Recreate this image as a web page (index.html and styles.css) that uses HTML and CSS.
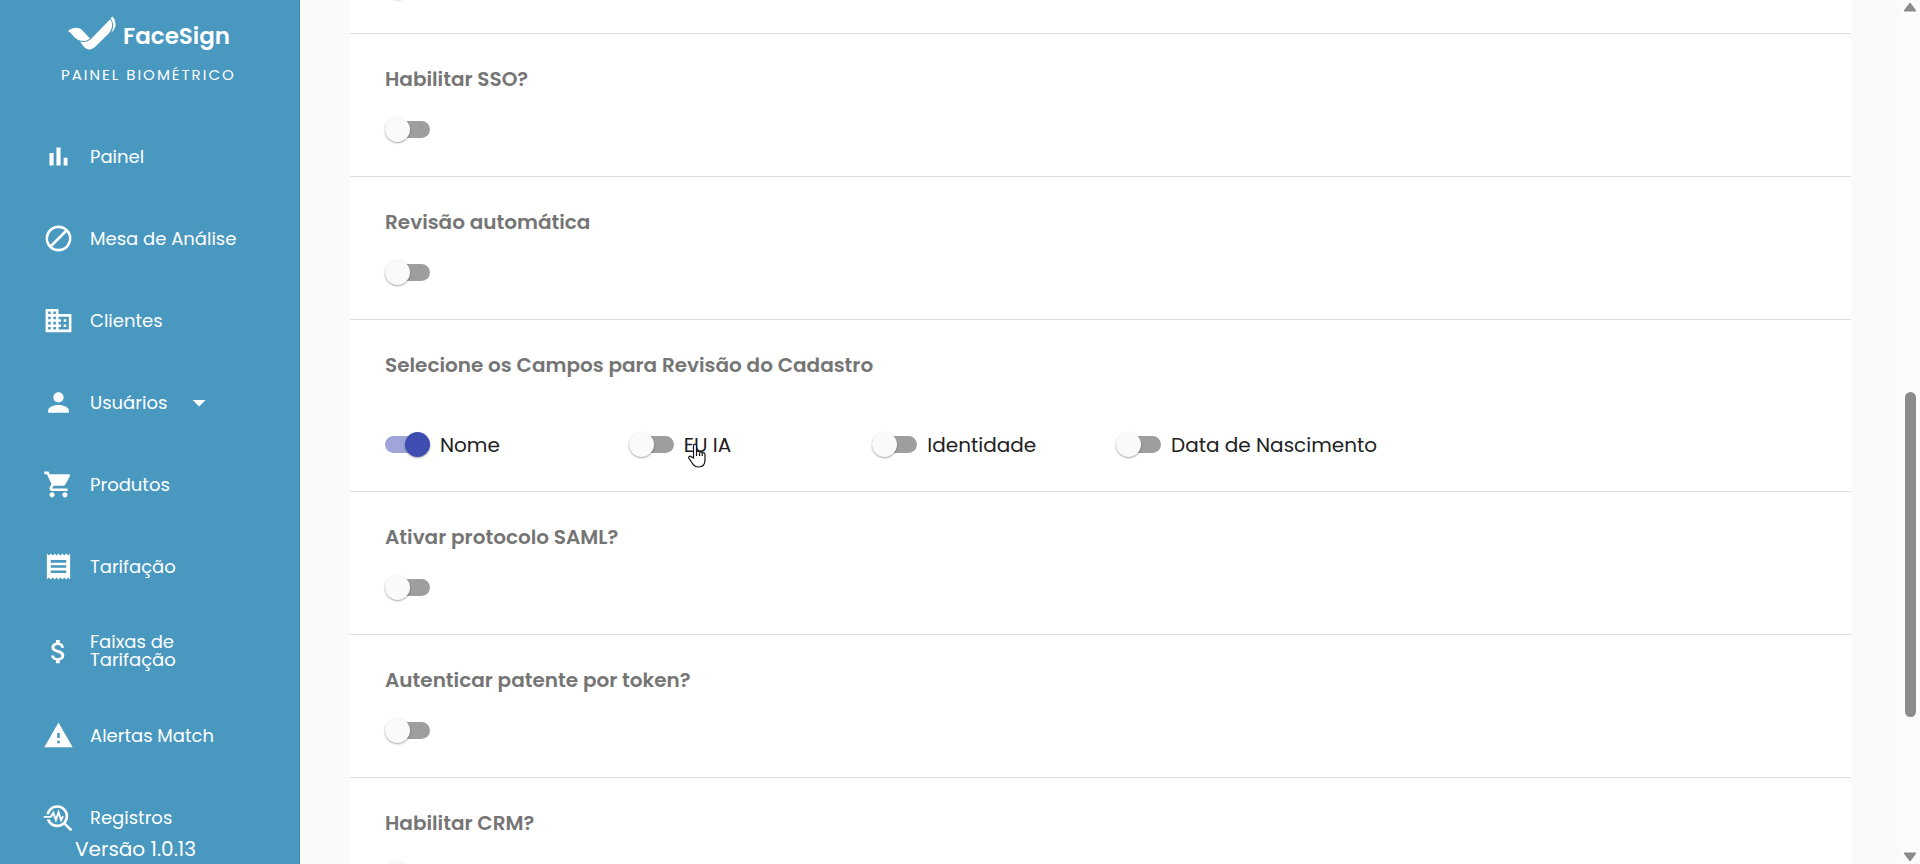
FILE: index.html
```html
<!DOCTYPE html>
<html lang="pt-BR">
<head>
    <meta charset="UTF-8">
    <meta name="viewport" content="width=device-width, initial-scale=1.0">
    <title>FaceSign - Painel Biométrico</title>
    <link rel="stylesheet" href="styles.css">
</head>
<body>
    <aside class="sidebar">
        <a href="#" class="brand">
            <svg class="brand-mark" viewBox="0 0 48 34" aria-hidden="true">
                <path d="M0 15C3 12 10 10 14 14L22 22.500C19 25 16 25.500 12 24.500C6 23 5 18 0 15Z"/>
                <path d="M12 25.500C17 26.500 20 25.500 23 23L42 3.500C44 5 45 9 43 14C42 17 39 19 37 21L27 31C23 34.500 19 34 16 31Z"/>
                <path d="M42.500 2.500L44.300 0.500C47 3 48.500 8 47 11.500C46 14 45 15 43.500 16.500C46 11 45.500 6 42.500 2.500Z"/>
            </svg>
            <span class="brand-name">FaceSign</span>
        </a>
        <p class="brand-sub">PAINEL BIOMÉTRICO</p>

        <nav class="menu">
            <a href="#painel">
                <svg viewBox="0 0 24 24"><path d="M5 9.2h3.2V19H5zM10.400 5h3.200v14h-3.200zm5.600 8h3v6h-3z"/></svg>
                <span>Painel</span>
            </a>
            <a href="#mesa">
                <svg viewBox="0 0 24 24"><path d="M12 2a10 10 0 1 0 0 20 10 10 0 0 0 0-20zm0 2c1.85 0 3.55.63 4.9 1.69L5.69 16.9A8 8 0 0 1 12 4zm0 16a7.9 7.9 0 0 1-4.9-1.69L18.31 7.1A8 8 0 0 1 12 20z"/></svg>
                <span>Mesa de Análise</span>
            </a>
            <a href="#clientes">
                <svg viewBox="0 0 24 24"><path d="M12 7V3H2v18h20V7H12zM6 19H4v-2h2v2zm0-4H4v-2h2v2zm0-4H4V9h2v2zm0-4H4V5h2v2zm4 12H8v-2h2v2zm0-4H8v-2h2v2zm0-4H8V9h2v2zm0-4H8V5h2v2zm10 12h-8v-2h2v-2h-2v-2h2v-2h-2V9h8v10zm-2-8h-2v2h2v-2zm0 4h-2v2h2v-2z"/></svg>
                <span>Clientes</span>
            </a>
            <a href="#usuarios">
                <svg viewBox="0 0 24 24"><path d="M12 12c2.21 0 4-1.79 4-4s-1.79-4-4-4-4 1.79-4 4 1.79 4 4 4zm0 2c-2.67 0-8 1.34-8 4v2h16v-2c0-2.66-5.33-4-8-4z"/></svg>
                <span>Usuários</span>
                <svg viewBox="0 0 24 24"><path d="M7.500 10l5 5 5-5z"/></svg>
            </a>
            <a href="#produtos">
                <svg viewBox="0 0 24 24"><path d="M7 18c-1.1 0-1.99.9-1.99 2S5.9 22 7 22s2-.9 2-2-.9-2-2-2zM1 2v2h2l3.6 7.59-1.35 2.45c-.16.28-.25.61-.25.96 0 1.1.9 2 2 2h12v-2H7.42c-.14 0-.25-.11-.25-.25l.03-.12.9-1.63h7.45c.75 0 1.41-.41 1.75-1.03l3.58-6.49A1 1 0 0 0 20 4H5.21l-.94-2H1zm16 16c-1.1 0-1.99.9-1.99 2s.89 2 1.99 2 2-.9 2-2-.9-2-2-2z"/></svg>
                <span>Produtos</span>
            </a>
            <a href="#tarifacao">
                <svg viewBox="0 0 24 24"><path d="M18 17H6v-2h12v2zm0-4H6v-2h12v2zm0-4H6V7h12v2zM3 22l1.5-1.5L6 22l1.5-1.5L9 22l1.5-1.5L12 22l1.5-1.5L15 22l1.5-1.5L18 22l1.5-1.5L21 22V2l-1.5 1.5L18 2l-1.5 1.5L15 2l-1.5 1.5L12 2l-1.5 1.5L9 2 7.5 3.5 6 2 4.5 3.5 3 2v20z"/></svg>
                <span>Tarifação</span>
            </a>
            <a href="#faixas">
                <svg viewBox="0 0 24 24"><path d="M11.8 10.9c-2.27-.59-3-1.2-3-2.15 0-1.09 1.01-1.85 2.7-1.85 1.78 0 2.44.85 2.5 2.1h2.21c-.07-1.72-1.12-3.3-3.21-3.81V3h-3v2.16c-1.94.42-3.5 1.68-3.5 3.61 0 2.31 1.91 3.46 4.7 4.13 2.5.6 3 1.48 3 2.41 0 .69-.49 1.79-2.7 1.79-2.06 0-2.87-.92-2.98-2.1h-2.2c.12 2.19 1.76 3.42 3.68 3.83V21h3v-2.15c1.95-.37 3.5-1.5 3.5-3.55 0-2.84-2.43-3.81-4.7-4.4z"/></svg>
                <span>Faixas de<br>Tarifação</span>
            </a>
            <a href="#alertas">
                <svg viewBox="0 0 24 24"><path d="M1 21h22L12 2 1 21zm12-3h-2v-2h2v2zm0-4h-2v-4h2v4z"/></svg>
                <span>Alertas Match</span>
            </a>
            <a href="#registros">
                <svg viewBox="0 0 24 24" class="outline">
                    <circle cx="11" cy="11" r="7.500"/>
                    <path d="M16.500 16.500l5.500 5.500"/>
                    <path class="knock" d="M2 11.500h3"/>
                    <path class="thin" d="M0.500 11.500h5.500l2-3 2 5.500 2-6 2 6 1.500-3"/>
                </svg>
                <span>Registros</span>
            </a>
        </nav>
        <p class="version">Versão 1.0.13</p>
    </aside>

    <main>
        <form class="panel">
            <section class="option scrolled">
                <input type="checkbox" class="switch" aria-label="Opção anterior">
            </section>
            <section class="option">
                <h3><label for="sso">Habilitar SSO?</label></h3>
                <input type="checkbox" class="switch" id="sso">
            </section>
            <section class="option">
                <h3><label for="revisao">Revisão automática</label></h3>
                <input type="checkbox" class="switch" id="revisao">
            </section>
            <section class="option">
                <h3>Selecione os Campos para Revisão do Cadastro</h3>
                <div class="fields">
                    <label><input type="checkbox" class="switch" checked>Nome</label>
                    <label>
                        <input type="checkbox" class="switch">EU IA
                        <svg class="pointer" viewBox="0 0 18 25" aria-hidden="true"><path d="M5.500 15V3c0-2.600 3-2.600 3 0v6c.5-1.500 3-1.200 3 .5.500-1.200 2.700-.8 2.700.8.700-.9 2.800-.5 2.800 1.200V17c0 4-2 7-6.500 7-3.500 0-5-1.500-6.300-4L1 15.500c-1-2 1-3 2.300-1.700zM8.500 9v4M11.500 10v3M14.200 11v2"/></svg>
                    </label>
                    <label><input type="checkbox" class="switch">Identidade</label>
                    <label class="wide"><input type="checkbox" class="switch">Data de Nascimento</label>
                </div>
            </section>
            <section class="option">
                <h3><label for="saml">Ativar protocolo SAML?</label></h3>
                <input type="checkbox" class="switch" id="saml">
            </section>
            <section class="option">
                <h3><label for="token">Autenticar patente por token?</label></h3>
                <input type="checkbox" class="switch" id="token">
            </section>
            <section class="option">
                <h3><label for="crm">Habilitar CRM?</label></h3>
                <input type="checkbox" class="switch" id="crm">
            </section>
        </form>
    </main>

    <div class="scrollbar" aria-hidden="true">
        <svg viewBox="0 0 14 10"><path d="M7 1L13 9H1z"/></svg>
        <div class="track"><div class="thumb"></div></div>
        <svg viewBox="0 0 14 10"><path d="M7 9L1 1h12z"/></svg>
    </div>
</body>
</html>
```
FILE: styles.css
```css
* {
    box-sizing: border-box;
}

body {
    margin: 0;
    display: flex;
    height: 100vh;
    overflow: hidden;
    background-color: #fafafa;
    color: #212121;
    font-family: Poppins, Inter, "Open Sans", sans-serif;
    font-size: 20px;
}

/* Sidebar */
.sidebar {
    display: flex;
    flex-direction: column;
    flex: none;
    width: 300px;
    padding-top: 16px;
    background-color: #4998c0;
    border-right: 1px solid #428bb0;
    color: white;
}

.sidebar svg {
    flex: none;
    fill: currentColor;
}

.brand {
    display: flex;
    gap: 7px;
    margin-left: 68px;
    height: 40px;
    color: white;
    text-decoration: none;
}

.brand-mark {
    width: 48px;
    height: 34px;
}

.brand-name {
    font-size: 23px;
    font-weight: 600;
    line-height: 40px;
}

.brand-sub {
    margin: 9px 0 0 61px;
    font-size: 15px;
    line-height: 20px;
    letter-spacing: 2px;
}

.menu {
    display: flex;
    flex-direction: column;
    gap: 51px;
    margin-top: 56px;
    padding-left: 43px;
}

.menu a {
    display: flex;
    align-items: center;
    gap: 16px;
    color: white;
    font-size: 18px;
    line-height: 18px;
    text-decoration: none;
}

.menu svg {
    width: 31px;
    height: 31px;
}

.menu .outline {
    fill: none;
    stroke: white;
    stroke-width: 2;
}

.menu .outline .knock {
    stroke: #4998c0;
    stroke-width: 4;
}

.menu .outline .thin {
    stroke-width: 1.5;
}

.version {
    margin: 0 0 0 75px;
    line-height: 32px;
}

/* Content */
main {
    flex: 1;
    padding: 0 49px 0 50px;
    overflow: hidden;
}

.panel {
    background-color: white;
}

.option {
    padding: 30px 35px 34px;
    border-bottom: 1px solid #e0e0e0;
}

.option.scrolled {
    margin-top: -26px;
    padding-top: 0;
}

h3 {
    margin: 0 0 23px;
    color: #757575;
    font-size: 20px;
    font-weight: 600;
    line-height: 30px;
}

.fields {
    display: grid;
    grid-template-columns: repeat(6, 1fr);
    gap: 31px;
    padding-top: 29px;
}

.fields label {
    display: flex;
    align-items: center;
    gap: 10px;
    position: relative;
    height: 25px;
}

.fields .wide {
    grid-column: span 2;
}

/* Switch */
.switch {
    appearance: none;
    display: flex;
    align-items: center;
    flex: none;
    position: relative;
    width: 45px;
    height: 25px;
    margin: 0;
    cursor: pointer;
}

.switch::before {
    content: "";
    width: 45px;
    height: 17px;
    border-radius: 9px;
    background-color: #9e9e9e;
}

.switch::after {
    content: "";
    position: absolute;
    left: 0;
    width: 25px;
    height: 25px;
    border-radius: 50%;
    background-color: #fafafa;
    box-shadow: 0 1px 2px rgba(0, 0, 0, 0.35);
}

.switch:checked::before {
    background-color: #9fa4d9;
}

.switch:checked::after {
    left: 20px;
    background-color: #3f4db0;
}

/* Hand cursor over the label */
.pointer {
    position: absolute;
    left: 59px;
    top: 11px;
    width: 18px;
    height: 25px;
    fill: white;
    stroke: #111;
    stroke-width: 1.2;
}

/* Scrollbar */
.scrollbar {
    display: flex;
    flex-direction: column;
    align-items: center;
    justify-content: space-between;
    width: 20px;
    padding: 2px 0;
    background-color: #fcfcfc;
}

.scrollbar svg {
    width: 14px;
    height: 10px;
    fill: #8b8b8b;
    stroke: #8b8b8b;
    stroke-linejoin: round;
}

.track {
    flex: 1;
    display: grid;
    grid-template-rows: 76fr 65fr 27fr;
}

.thumb {
    grid-row: 2;
    width: 11px;
    border-radius: 6px;
    background-color: #8b8b8b;
}
```
